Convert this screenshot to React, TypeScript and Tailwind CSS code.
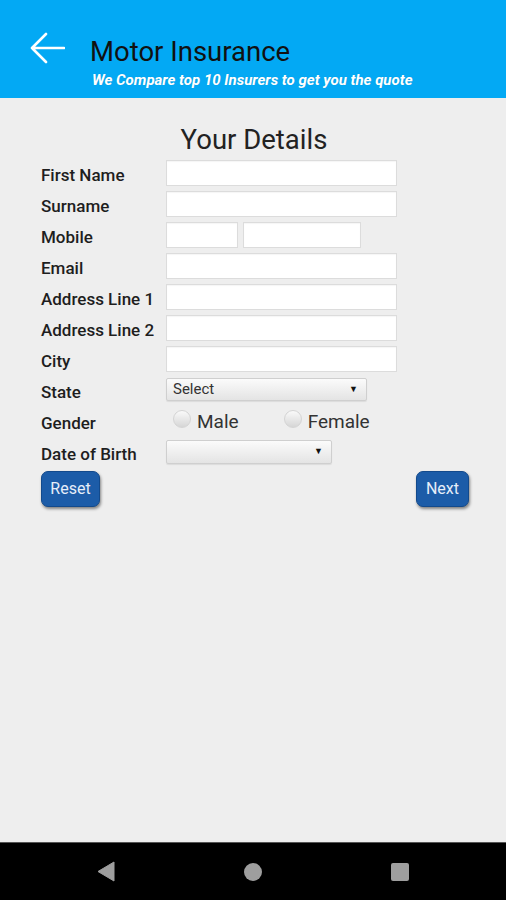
const font = "font-['Roboto','Liberation_Sans',sans-serif]";

const labelClass = "w-[125px] shrink-0 pt-[7px] text-[17px] font-medium text-[#1e1e1e]";
const inputClass = "h-[26px] border border-[#dcdcdc] bg-white shadow-[inset_0_1px_1px_rgba(0,0,0,0.04)]";
const selectClass =
  "flex h-[23px] items-center justify-between rounded-[2px] border border-[#cfcfcf] bg-gradient-to-b from-[#fbfbfb] to-[#e4e4e4] pl-[6px] pr-[8px] shadow-[0_1px_1px_rgba(0,0,0,0.08)]";

function Row({ label, children }: { label: string; children: React.ReactNode }) {
  return (
    <div className="flex h-[31px] items-center">
      <div className={labelClass}>{label}</div>
      {children}
    </div>
  );
}

function Radio({ label }: { label: string }) {
  return (
    <div className="flex items-center">
      <span className="mb-[4px] h-[18px] w-[18px] rounded-full border border-[#d4d4d4] bg-gradient-to-b from-[#fafafa] to-[#d6d6d6]" />
      <span className="ml-[6px] pt-[3px] text-[19px] text-[#333]">{label}</span>
    </div>
  );
}

function Caret() {
  return <span className="text-[9px] leading-none text-[#111]">▼</span>;
}

export default function App() {
  return (
    <div className={`flex h-[900px] w-[506px] flex-col bg-[#eeeeee] ${font}`}>
      <header className="flex h-[98px] shrink-0 items-center bg-[#03a9f4] pl-[30px]">
        <svg width="35" height="32" viewBox="0 0 35 32" fill="none" className="-mt-[2px]">
          <path d="M34 16H2M16 2L2 16l14 14" stroke="white" strokeWidth="2.6" strokeLinecap="round" strokeLinejoin="round" />
        </svg>
        <div className="ml-[25px] mt-[27px]">
          <div className="text-[27.5px] leading-[30px] text-[#111]">Motor Insurance</div>
          <div className="mt-[4px] pl-[2px] text-[15px] font-bold italic leading-[18px] text-white [text-shadow:0_0_1px_rgba(0,0,0,0.15)]">
            We Compare top 10 Insurers to get you the quote
          </div>
        </div>
      </header>

      <main className="flex-1 pt-[26px] pl-[41px] pr-[37px]">
        <h1 className="h-[32px] pr-[2px] text-center text-[27.5px] leading-[32px] text-[#222]">Your Details</h1>
        <div className="mt-[1px] flex flex-col">
          <Row label="First Name">
            <div className={`${inputClass} w-[231px]`} />
          </Row>
          <Row label="Surname">
            <div className={`${inputClass} w-[231px]`} />
          </Row>
          <Row label="Mobile">
            <div className={`${inputClass} w-[72px]`} />
            <div className={`${inputClass} ml-[5px] w-[118px]`} />
          </Row>
          <Row label="Email">
            <div className={`${inputClass} w-[231px]`} />
          </Row>
          <Row label="Address Line 1">
            <div className={`${inputClass} w-[231px]`} />
          </Row>
          <Row label="Address Line 2">
            <div className={`${inputClass} w-[231px]`} />
          </Row>
          <Row label="City">
            <div className={`${inputClass} w-[231px]`} />
          </Row>
          <Row label="State">
            <div className={`${selectClass} w-[201px]`}>
              <span className="text-[15px] text-[#333]">Select</span>
              <Caret />
            </div>
          </Row>
          <Row label="Gender">
            <div className="flex items-center pl-[7px]">
              <Radio label="Male" />
              <div className="ml-[45px]">
                <Radio label="Female" />
              </div>
            </div>
          </Row>
          <Row label="Date of Birth">
            <div className={`${selectClass} h-[24px] w-[166px]`}>
              <span />
              <Caret />
            </div>
          </Row>
        </div>

        <div className="mt-[4px] flex justify-between">
          <button className="h-[36px] w-[59px] rounded-[7px] border border-[#134a8c] bg-[#1c5ca8] text-[16px] text-[#e6eef9] shadow-[1px_2px_3px_rgba(0,0,0,0.45)]">
            Reset
          </button>
          <button className="h-[36px] w-[53px] rounded-[7px] border border-[#134a8c] bg-[#1c5ca8] text-[16px] text-[#e6eef9] shadow-[1px_2px_3px_rgba(0,0,0,0.45)]">
            Next
          </button>
        </div>
      </main>

      <nav className="flex h-[58px] shrink-0 items-center justify-center border-t border-[#555] bg-black">
        <div className="flex w-[312px] items-center justify-between">
          <svg width="18" height="21" viewBox="0 0 18 21">
            <path d="M17 1L1 10.5L17 20Z" fill="#9e9e9e" stroke="#9e9e9e" strokeLinejoin="round" />
          </svg>
          <span className="h-[18px] w-[18px] rounded-full bg-[#9e9e9e]" />
          <span className="h-[18px] w-[18px] rounded-[2px] bg-[#9e9e9e]" />
        </div>
      </nav>
    </div>
  );
}
